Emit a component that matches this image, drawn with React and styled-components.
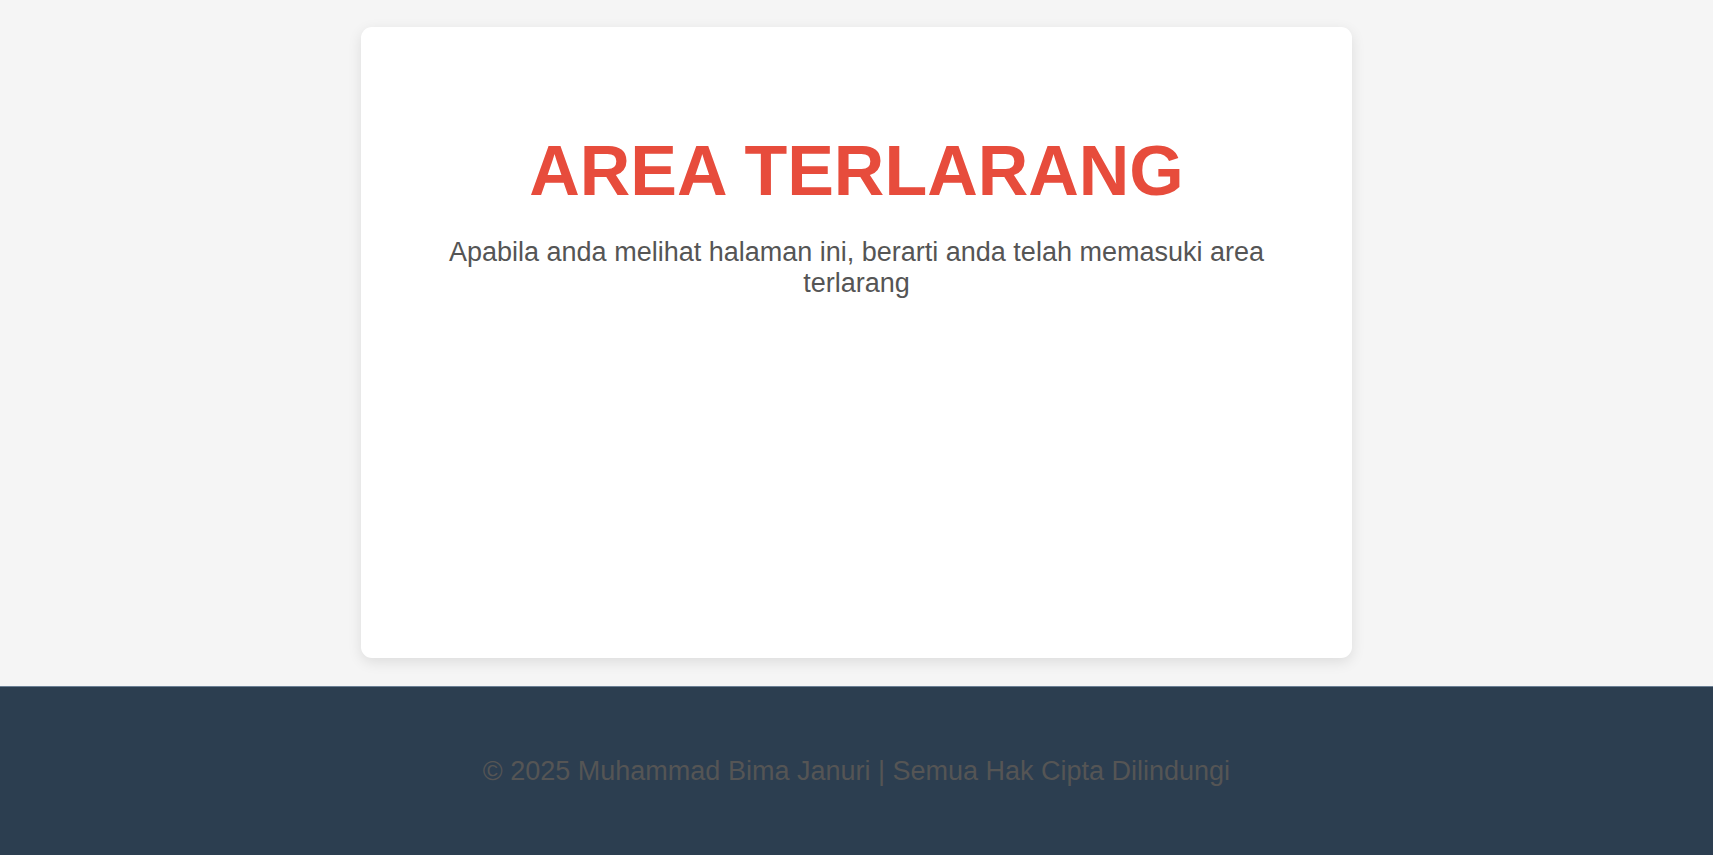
import styled, { createGlobalStyle } from "styled-components";

const GlobalStyle = createGlobalStyle`
  html, body {
    margin: 0;
    padding: 0;
    background: #f5f5f5;
    font-family: "Liberation Sans", Arial, sans-serif;
  }
`;

const Page = styled.div`
  display: flex;
  flex-direction: column;
  min-height: 100vh;
`;

const Main = styled.main`
  display: flex;
  justify-content: center;
  padding: 27px 0 28px;
`;

const Card = styled.section`
  width: 991px;
  min-height: 631px;
  box-sizing: border-box;
  padding: 106px 50px 40px;
  background: #ffffff;
  border-radius: 11px;
  box-shadow: 0 4px 14px rgba(0, 0, 0, 0.1);
  text-align: center;
`;

const Title = styled.h1`
  margin: 0 0 27px;
  font-size: 70px;
  font-weight: 700;
  line-height: 1.1;
  color: #e74c3c;
`;

const Message = styled.p`
  margin: 0;
  font-size: 27px;
  line-height: 1.14;
  color: #555555;
`;

const Footer = styled.footer`
  display: flex;
  align-items: center;
  justify-content: center;
  height: 169px;
  background: #2c3e50;
  border-top: 1px solid #6b7f94;
  box-sizing: border-box;
`;

const FooterText = styled.p`
  margin: 0;
  font-size: 27px;
  color: #555555;
`;

const App = () => {
  return (
    <Page>
      <GlobalStyle />
      <Main>
        <Card>
          <Title>AREA TERLARANG</Title>
          <Message>
            Apabila anda melihat halaman ini, berarti anda telah memasuki area terlarang
          </Message>
        </Card>
      </Main>
      <Footer>
        <FooterText>© 2025 Muhammad Bima Januri | Semua Hak Cipta Dilindungi</FooterText>
      </Footer>
    </Page>
  );
};

export default App;
